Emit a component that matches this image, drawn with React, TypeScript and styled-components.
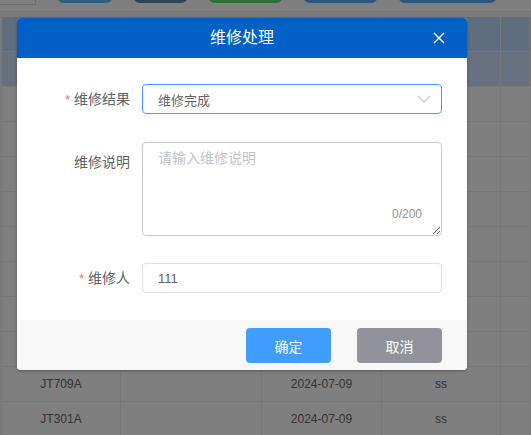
import styled, { createGlobalStyle } from 'styled-components'

const GlobalStyle = createGlobalStyle`
  html, body {
    margin: 0;
    padding: 0;
    background: #ffffff;
  }
  body {
    font-family: "Liberation Sans", "Noto Sans CJK SC", Arial, sans-serif;
    color: #606266;
  }
  * {
    box-sizing: border-box;
  }
`

const Page = styled.div`
  position: relative;
  width: 531px;
  height: 435px;
  overflow: hidden;
  background: #f6f6f6;
`

const Toolbar = styled.div`
  display: flex;
  align-items: flex-end;
  gap: 20px;
  height: 12px;
  background: #ffffff;
  border-bottom: 1px solid #ececec;
  overflow: hidden;
  margin-bottom: 5px;
`

const SearchBox = styled.div`
  flex: none;
  width: 36px;
  height: 30px;
  margin-bottom: 6px;
  margin-right: 1px;
  background: #ffffff;
  border: 1px solid #dcdcdc;
  border-left: none;
  border-top: none;
`

const ToolButton = styled.div<{ $color: string; $width: number }>`
  flex: none;
  width: ${(p) => p.$width}px;
  height: 30px;
  margin-bottom: 8px;
  border-radius: 7px;
  background: ${(p) => p.$color};
`

const Table = styled.div`
  margin-left: 1px;
  border-left: 1px solid #eeeeee;
  background: #ffffff;
`

const Row = styled.div<{ $bg?: string }>`
  display: grid;
  grid-template-columns: 119px 141px 120px 119px 1fr;
  height: 35px;
  background: ${(p) => p.$bg ?? '#ffffff'};
  border-bottom: 1px solid #eeeeee;
`

const Cell = styled.div`
  display: flex;
  align-items: center;
  justify-content: center;
  border-right: 1px solid #eeeeee;
  font-size: 12px;
  color: #666666;
  white-space: nowrap;
  overflow: hidden;
`

const Mask = styled.div`
  position: absolute;
  inset: 0;
  background: rgba(0, 0, 0, 0.5);
`

const Dialog = styled.div`
  position: absolute;
  left: 17px;
  top: 18px;
  width: 450px;
  background: #ffffff;
  border-radius: 4px;
  overflow: hidden;
  box-shadow: 0 1px 3px rgba(0, 0, 0, 0.3);
`

const DialogHeader = styled.div`
  position: relative;
  display: flex;
  align-items: center;
  justify-content: center;
  height: 40px;
  background: #0060c6;
`

const DialogTitle = styled.span`
  font-size: 16px;
  color: #ffffff;
  line-height: 24px;
`

const CloseButton = styled.button`
  position: absolute;
  right: 21px;
  top: 13px;
  width: 14px;
  height: 14px;
  padding: 0;
  border: none;
  background: transparent;
  display: flex;
  align-items: center;
  justify-content: center;
  cursor: pointer;
`

const DialogBody = styled.div`
  display: flex;
  flex-direction: column;
  gap: 27px;
  padding: 26px 25px 26px 0;
`

const FormItem = styled.div`
  display: flex;
  align-items: flex-start;
`

const Label = styled.label<{ $lh: number }>`
  flex: none;
  width: 125px;
  padding-right: 12px;
  text-align: right;
  font-size: 14px;
  line-height: ${(p) => p.$lh}px;
  color: #606266;
`

const Star = styled.span`
  color: #f56c6c;
  margin-right: 4px;
  font-size: 13px;
`

const SelectBox = styled.div`
  display: flex;
  align-items: center;
  justify-content: space-between;
  width: 300px;
  height: 30px;
  padding: 0 10px 0 15px;
  border: 1px solid #409eff;
  border-radius: 4px;
  font-size: 13px;
  color: #606266;
`

const AreaWrap = styled.div`
  position: relative;
  width: 300px;
  height: 94px;
`

const TextArea = styled.textarea`
  display: block;
  width: 100%;
  height: 100%;
  padding: 5px 15px;
  border: 1px solid #c4c8cf;
  border-radius: 4px;
  font-family: "Liberation Sans", "Noto Sans CJK SC", Arial, sans-serif;
  font-size: 14px;
  line-height: 1.5;
  color: #606266;
  outline: none;
  resize: vertical;
  &::placeholder {
    color: #c0c4cc;
  }
`

const Counter = styled.span`
  position: absolute;
  right: 20px;
  bottom: 15px;
  font-size: 12px;
  color: #909399;
  background: #ffffff;
`

const TextInput = styled.input`
  width: 300px;
  height: 30px;
  padding: 0 15px;
  border: 1px solid #dcdfe6;
  border-radius: 4px;
  font-family: "Liberation Sans", "Noto Sans CJK SC", Arial, sans-serif;
  font-size: 13px;
  color: #606266;
  outline: none;
`

const DialogFooter = styled.div`
  display: flex;
  justify-content: flex-end;
  align-items: flex-start;
  gap: 26px;
  height: 50px;
  padding: 8px 25px 0;
  background: #f8f8f8;
`

const Button = styled.button<{ $bg: string }>`
  width: 85px;
  height: 35px;
  border: none;
  border-radius: 4px;
  background: ${(p) => p.$bg};
  color: #ffffff;
  font-family: "Liberation Sans", "Noto Sans CJK SC", Arial, sans-serif;
  font-size: 14px;
  cursor: pointer;
`

const toolButtons = [
  { color: '#58bcff', width: 56 },
  { color: '#5c84b4', width: 55 },
  { color: '#5cdc70', width: 75 },
  { color: '#54acff', width: 75 },
  { color: '#54acff', width: 99 },
]

// rows hidden behind the dialog are left empty; only the last two show
const rows = [
  ['', '', '', ''],
  ['', '', '', ''],
  ['', '', '', ''],
  ['', '', '', ''],
  ['', '', '', ''],
  ['', '', '', ''],
  ['', '', '', ''],
  ['', '', '', ''],
  ['', '', '', ''],
  ['JT709A', '', '2024-07-09', 'ss'],
  ['JT301A', '', '2024-07-09', 'ss'],
]

export default function App() {
  return (
    <>
      <GlobalStyle />
      <Page>
        <Toolbar>
          <SearchBox />
          {toolButtons.map((b, i) => (
            <ToolButton key={i} $color={b.color} $width={b.width} />
          ))}
        </Toolbar>
        <Table>
          <Row $bg="#bedcfc">
            <Cell />
            <Cell />
            <Cell />
            <Cell />
            <Cell />
          </Row>
          {rows.map((r, i) => (
            <Row key={i} $bg={i === 0 ? '#cce0fe' : undefined}>
              {r.map((c, j) => (
                <Cell key={j}>{c}</Cell>
              ))}
              <Cell />
            </Row>
          ))}
        </Table>
        <Mask />
        <Dialog>
          <DialogHeader>
            <DialogTitle>维修处理</DialogTitle>
            <CloseButton aria-label="关闭">
              <svg width="12" height="12" viewBox="0 0 12 12">
                <path d="M1 1 L11 11 M11 1 L1 11" stroke="#ffffff" strokeWidth="1.4" fill="none" />
              </svg>
            </CloseButton>
          </DialogHeader>
          <DialogBody>
            <FormItem>
              <Label $lh={30}>
                <Star>*</Star>维修结果
              </Label>
              <SelectBox>
                <span>维修完成</span>
                <svg width="14" height="8" viewBox="0 0 14 8">
                  <path d="M1 1 L7 7 L13 1" stroke="#c0c4cc" strokeWidth="1.2" fill="none" />
                </svg>
              </SelectBox>
            </FormItem>
            <FormItem>
              <Label $lh={40}>维修说明</Label>
              <AreaWrap>
                <TextArea placeholder="请输入维修说明" />
                <Counter>0/200</Counter>
              </AreaWrap>
            </FormItem>
            <FormItem>
              <Label $lh={30}>
                <Star>*</Star>维修人
              </Label>
              <TextInput defaultValue="111" />
            </FormItem>
          </DialogBody>
          <DialogFooter>
            <Button $bg="#409eff">确定</Button>
            <Button $bg="#909399">取消</Button>
          </DialogFooter>
        </Dialog>
      </Page>
    </>
  )
}
